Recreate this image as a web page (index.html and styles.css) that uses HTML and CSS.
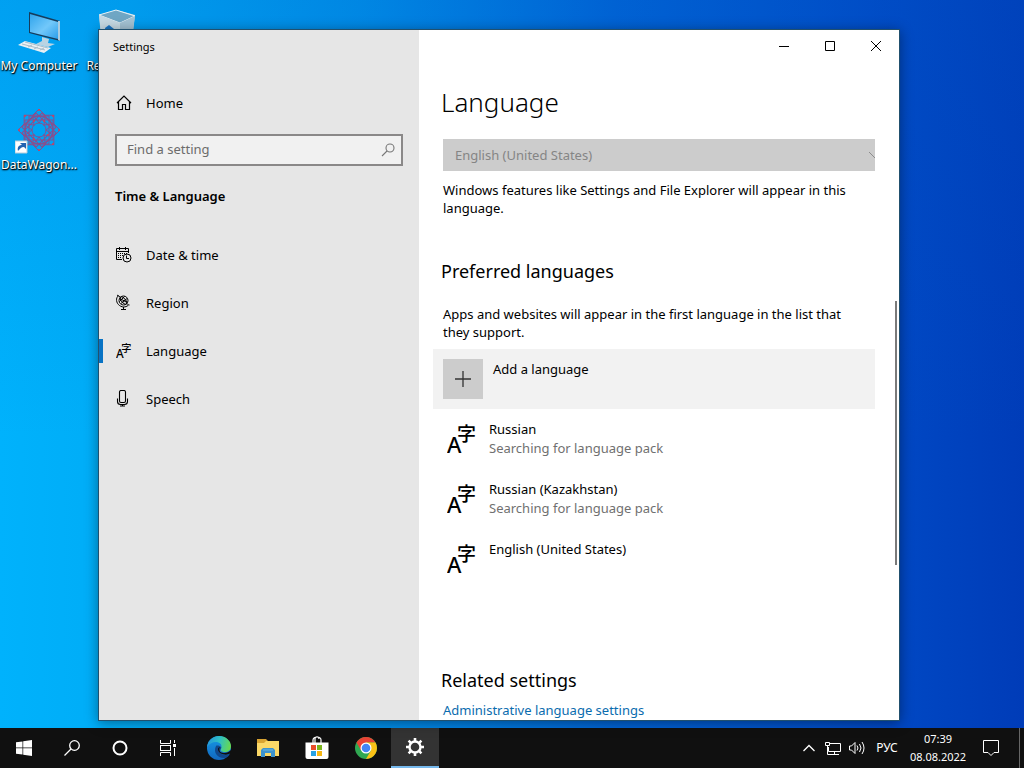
FILE: index.html
```html
<!DOCTYPE html>
<html lang="en">
<head>
    <meta charset="UTF-8">
    <meta name="viewport" content="width=device-width, initial-scale=1.0">
    <title>Settings</title>
    <link rel="stylesheet" href="styles.css">
</head>
<body>
    <!-- Shared icon -->
    <svg class="sprite" aria-hidden="true">
        <symbol id="icon-language" viewBox="0 0 30 30">
            <text x="0" y="29" class="glyph-latin">A</text>
            <text x="10" y="17" class="glyph-kanji">字</text>
        </symbol>
    </svg>

    <main class="desktop">
        <!-- Desktop shortcuts -->
        <a href="#" class="shortcut shortcut-computer">
            <svg width="48" height="48" viewBox="0 0 48 48" aria-hidden="true">
                <defs>
                    <linearGradient id="screen" x1="0" y1="0" x2="1" y2="1">
                        <stop offset="0" stop-color="#2fa4ec"/>
                        <stop offset=".55" stop-color="#72c8fa"/>
                        <stop offset="1" stop-color="#2b9eea"/>
                    </linearGradient>
                </defs>
                <path d="M27 28l7 2-1 4 7 1-7 3-12-3 6-3z" fill="#b9d4e3"/>
                <path d="M14 3l31 9v20L14 24z" fill="#163c5c"/>
                <path d="M15 5l28 8v17l-28-7z" fill="url(#screen)"/>
                <path d="M43 12l2 0v20l-2-1z" fill="#a8cbe0"/>
                <path d="M3 36l7-4 26 7-7 5z" fill="#e9f0f4"/>
                <path d="M7 35l23 6M10 33l23 6M13 38l4-2M19 40l4-2M25 41l4-2" stroke="#a9bdc9" fill="none"/>
            </svg>
            <span>My Computer</span>
        </a>
        <a href="#" class="shortcut shortcut-bin">
            <svg width="48" height="48" viewBox="0 0 48 48" aria-hidden="true">
                <path d="M5 6l18-5 18 5-4 35-22 3-7-4z" fill="#b4d0df"/>
                <path d="M5 6l17-5 19 6-15 7z" fill="#6fa6c4" stroke="#e6f1f6"/>
                <path d="M5 6l21 8v30l-17-3z" fill="#c6d9e3"/>
                <path d="M26 14l15-7-5 34-10 3z" fill="#a3c2d3"/>
                <path d="M11 19l4-3 5 4-2 6h-6z" fill="#1975c5"/>
            </svg>
            <span>Recycle Bin</span>
        </a>
        <a href="#" class="shortcut shortcut-datawagon">
            <svg width="48" height="48" viewBox="0 0 48 48" aria-hidden="true">
                <g fill="none" stroke="#87508f" stroke-width="1">
                    <g id="petals">
                        <path d="M24 15l-6-8 6-6 6 6zM24 43l-6-6 6-8 6 8z"/>
                        <path d="M17 22l-8-6-6 6 6 6zM31 22l8-6 6 6-6 6z"/>
                        <path d="M14 8h20v28H14zM10 12h28v20H10z"/>
                        <circle cx="24" cy="22" r="14"/>
                    </g>
                    <use href="#petals" transform="rotate(45 24 22)"/>
                    <circle cx="24" cy="22" r="7"/>
                </g>
                <g fill="#d0405a">
                    <circle cx="24" cy="2" r="1"/><circle cx="38" cy="8" r="1"/><circle cx="44" cy="22" r="1"/><circle cx="38" cy="36" r="1"/>
                    <circle cx="24" cy="42" r="1"/><circle cx="10" cy="8" r="1"/><circle cx="4" cy="22" r="1"/>
                    <circle cx="19" cy="13" r="1"/><circle cx="29" cy="13" r="1"/><circle cx="33" cy="27" r="1"/><circle cx="19" cy="31" r="1"/>
                </g>
                <path d="M0 33h12v12H0z" fill="#fff" stroke="#b8cbd8"/>
                <path d="M3 43c-1-4 1-6 4-6l-2-2h6v6l-2-2c-3 0-4 2-6 4z" fill="#2263b1"/>
            </svg>
            <span>DataWagon...</span>
        </a>

        <!-- Settings window -->
        <section class="window" aria-label="Settings">
            <aside class="sidebar">
                <div class="window-title">Settings</div>
                <a href="#" class="nav-link home-link">
                    <svg width="16" height="16" viewBox="0 0 16 16" aria-hidden="true">
                        <path d="M1 8l7-7 7 7M2.500 7v7.500h4v-5h3v5h4V7" fill="none" stroke="#000" stroke-width="1.200"/>
                    </svg>
                    Home
                </a>
                <form class="search">
                    <input type="text" id="search" aria-label="Find a setting" placeholder="Find a setting">
                    <button type="button" aria-label="Search">
                        <svg width="14" height="14" viewBox="0 0 14 14" aria-hidden="true">
                            <g fill="none" stroke="#777" stroke-width="1.100"><circle cx="9" cy="5" r="4"/><path d="M6 8l-5 5"/></g>
                        </svg>
                    </button>
                </form>
                <h2 class="category">Time &amp; Language</h2>
                <nav>
                    <a href="#" class="nav-link">
                        <svg width="16" height="18" viewBox="0 0 16 18" aria-hidden="true">
                            <g fill="none" stroke="#000">
                                <path d="M6 13.500H.5v-11h12V7M.5 5.500h12M3.500 1v3M9.500 1v3"/>
                                <path d="M2 7.500h9M2 9.500h5M2 11.500h4" stroke-dasharray="1 1"/>
                                <circle cx="11" cy="12" r="4"/><path d="M10.500 9.500v3H13"/>
                            </g>
                        </svg>
                        Date &amp; time
                    </a>
                    <a href="#" class="nav-link">
                        <svg width="16" height="18" viewBox="0 0 16 18" aria-hidden="true">
                            <g fill="none" stroke="#000">
                                <circle cx="7.500" cy="6.500" r="4.500"/>
                                <ellipse cx="7.500" cy="6.500" rx="2" ry="4.500" transform="rotate(-40 7.500 6.500)"/>
                                <path d="M4 4.500l7 4M5 9.500l6-5M3.500 7.500l5-5"/>
                                <path d="M2.500 1.500C-.5 4 0 9 3.500 11.500s7.500 1.500 9.500-1M1 1l3 2M11 9.500l2 2M7.500 13v2.500M5 15.500h5"/>
                            </g>
                        </svg>
                        Region
                    </a>
                    <a href="#" class="nav-link active" aria-current="page">
                        <svg width="16" height="16" aria-hidden="true"><use href="#icon-language"/></svg>
                        Language
                    </a>
                    <a href="#" class="nav-link">
                        <svg width="16" height="18" viewBox="0 0 16 18" aria-hidden="true">
                            <g fill="none" stroke="#000" stroke-width="1.100">
                                <rect x="3.500" y=".5" width="6" height="12" rx="1.500"/>
                                <path d="M1.500 8.500v3c0 2 1 3 3 3h4c2 0 3-1 3-3v-3M6.500 14.500v2M4 16h5"/>
                            </g>
                        </svg>
                        Speech
                    </a>
                </nav>
            </aside>

            <div class="pane">
                <div class="window-controls">
                    <button type="button" aria-label="Minimize"><svg width="12" height="12" viewBox="0 0 12 12"><path d="M1 6.500h10" stroke="#000"/></svg></button>
                    <button type="button" aria-label="Maximize"><svg width="12" height="12" viewBox="0 0 12 12"><path d="M1.500 1.500h9v9h-9z" fill="none" stroke="#000"/></svg></button>
                    <button type="button" aria-label="Close"><svg width="12" height="12" viewBox="0 0 12 12"><path d="M1 1l10 10M11 1L1 11" stroke="#000"/></svg></button>
                </div>

                <div class="content">
                    <h1>Language</h1>
                    <div class="select-wrap">
                        <select id="display-language" aria-label="Display language" disabled>
                            <option>English (United States)</option>
                        </select>
                        <svg width="6" height="8" viewBox="0 0 6 8" aria-hidden="true"><path d="M0 1l6 6" stroke="#8c8c8c"/></svg>
                    </div>
                    <p>Windows features like Settings and File Explorer will appear in this language.</p>

                    <h2>Preferred languages</h2>
                    <p>Apps and websites will appear in the first language in the list that they support.</p>
                    <button type="button" class="add-language">
                        <span class="add-icon">
                            <svg width="16" height="16" viewBox="0 0 16 16" aria-hidden="true"><path d="M8 0v16M0 8h16" stroke="#333" stroke-width="1.300"/></svg>
                        </span>
                        Add a language
                    </button>
                    <ul class="languages">
                        <li>
                            <svg width="30" height="30" aria-hidden="true"><use href="#icon-language"/></svg>
                            <div>Russian<small>Searching for language pack</small></div>
                        </li>
                        <li>
                            <svg width="30" height="30" aria-hidden="true"><use href="#icon-language"/></svg>
                            <div>Russian (Kazakhstan)<small>Searching for language pack</small></div>
                        </li>
                        <li>
                            <svg width="30" height="30" aria-hidden="true"><use href="#icon-language"/></svg>
                            <div>English (United States)</div>
                        </li>
                    </ul>

                    <h2 class="related">Related settings</h2>
                    <a href="#" class="related-link">Administrative language settings</a>
                </div>
                <div class="scroll-thumb"></div>
            </div>
        </section>
    </main>

    <!-- Taskbar -->
    <footer class="taskbar">
        <div class="system-buttons">
            <button type="button" aria-label="Start">
                <svg width="16" height="16" viewBox="0 0 16 16"><path d="M0 2.300l6.500-.9v6.200H0zM7.200 1.300L16 0v7.600H7.200zM0 8.300h6.500v6.300L0 13.700zM7.200 8.300H16V16l-8.800-1.300z" fill="#fff"/></svg>
            </button>
            <button type="button" aria-label="Search">
                <svg width="16" height="16" viewBox="0 0 16 16"><g fill="none" stroke="#fff" stroke-width="1.300"><circle cx="10.500" cy="5.500" r="4.800"/><path d="M7 9l-6.500 6.500"/></g></svg>
            </button>
            <button type="button" aria-label="Cortana">
                <svg width="16" height="16" viewBox="0 0 16 16"><circle cx="8" cy="8" r="6.500" fill="none" stroke="#fff" stroke-width="2"/></svg>
            </button>
            <button type="button" aria-label="Task view">
                <svg width="18" height="16" viewBox="0 0 18 16"><path d="M1.500 0v3.500h10V0M1.500 16v-3.500h10V16M1.500 5v6M11.500 5v6M1 5.500h11M1 10.500h11M15.500 0v3M15.500 8v8" fill="none" stroke="#fff"/><path d="M14 4h3v3h-3z" fill="#fff"/></svg>
            </button>
        </div>
        <div class="apps">
            <button type="button" aria-label="Edge">
                <svg width="26" height="26" viewBox="0 0 26 26">
                    <defs>
                        <linearGradient id="edge-top" x1="0" y1=".3" x2="1" y2=".5">
                            <stop offset="0" stop-color="#2494dc"/>
                            <stop offset=".5" stop-color="#2fc1c4"/>
                            <stop offset="1" stop-color="#67d94f"/>
                        </linearGradient>
                        <linearGradient id="edge-left" x1="0" y1="0" x2="0" y2="1">
                            <stop offset="0" stop-color="#159ae6"/>
                            <stop offset="1" stop-color="#1267bf"/>
                        </linearGradient>
                    </defs>
                    <circle cx="13" cy="13" r="12" fill="url(#edge-left)"/>
                    <path d="M1 12C2 5 7 1 13 1c7 0 12 5 12 10 0 4-3 6-6 6-3 0-5-1-4-3 2-5-2-7-5-7-4 0-7 2-9 5z" fill="url(#edge-top)"/>
                    <path d="M10 11c-3 6 1 12 8 12 2 0 4-1 6-4-4 2-10 1-10-3 0-2 2-3 1-4s-4-2-5-1z" fill="#11488c"/>
                    <path d="M14 12c-2 3 0 6 4 6 3 0 5-1 7-3v3l-2 1c-5 2-11-1-11-5 0-1 1-2 2-2z" fill="#101010"/>
                </svg>
            </button>
            <button type="button" aria-label="File Explorer">
                <svg width="22" height="20" viewBox="0 0 22 20"><path d="M0 1h9l2 2h11v15H0z" fill="#d9a432"/><path d="M0 5h7l2-2h13v15H0z" fill="#fbd867"/><path d="M4 19v-7l2-2h10l2 2v7h-4v-4H8v4z" fill="#3d93cd"/><path d="M6 12h10" stroke="#6bb6e2"/></svg>
            </button>
            <button type="button" aria-label="Microsoft Store">
                <svg width="24" height="24" viewBox="0 0 24 24"><path d="M8 7V4c0-4 8-4 8 0v3M10 7V3c0-3 4-3 4 0" fill="none" stroke="#fff" stroke-width="1.200"/><path d="M.5 6.500h23V21q0 2-2 2h-19q-2 0-2-2z" fill="#fff"/><path d="M6 9h5v5H6z" fill="#e94e2b"/><path d="M12 9h5v5h-5z" fill="#7bb51d"/><path d="M6 15h5v5H6z" fill="#28a2e4"/><path d="M12 15h5v5h-5z" fill="#f7b713"/></svg>
            </button>
            <button type="button" aria-label="Chrome">
                <svg width="22" height="22" viewBox="0 0 22 22"><circle cx="11" cy="11" r="11" fill="#30a852"/><path d="M1.500 5.500a11 11 0 0 1 19 0H11l-4.800 8.200z" fill="#e84335"/><path d="M20.500 5.500A11 11 0 0 1 11 22l4.800-8.200L11 5.500z" fill="#fbc116"/><circle cx="11" cy="11" r="5.500" fill="#fff"/><circle cx="11" cy="11" r="4.300" fill="#4285f4"/></svg>
            </button>
            <button type="button" class="running" aria-label="Settings">
                <svg width="20" height="20" viewBox="0 0 20 20">
                    <g stroke="#fff" fill="none">
                        <circle cx="10" cy="10" r="5.500" stroke-width="2.400"/>
                        <path d="M10 1v3M10 16v3M1 10h3M16 10h3M3.600 3.600l2.200 2.200M14.200 14.200l2.200 2.200M3.600 16.400l2.200-2.200M14.200 5.800l2.200-2.200" stroke-width="2.600"/>
                    </g>
                </svg>
            </button>
        </div>
        <div class="tray">
            <button type="button" aria-label="Show hidden icons"><svg width="14" height="8" viewBox="0 0 14 8"><path d="M1.500 7L7 1.500 12.500 7" fill="none" stroke="#fff" stroke-width="1.300"/></svg></button>
            <button type="button" aria-label="Network"><svg width="18" height="14" viewBox="0 0 18 14"><path d="M6 2.500h10.500v8H4.500V6M10.500 10.500v3M6 13.500h9M1.500 1.500h4v3h-4zM3.500 4.500v9H6" fill="none" stroke="#fff"/></svg></button>
            <button type="button" aria-label="Volume"><svg width="18" height="14" viewBox="0 0 18 14"><path d="M1.500 5h2L7 1.500v11L3.500 9h-2zM9 4.500q2 2.500 0 5M11.500 3q3 4 0 8M14 1q4 6 0 12" fill="none" stroke="#fff"/></svg></button>
            <button type="button" class="keyboard" lang="ru">РУС</button>
            <button type="button" class="clock"><span>07:39</span><span>08.08.2022</span></button>
            <button type="button" class="notifications" aria-label="Notifications"><svg width="18" height="18" viewBox="0 0 18 18"><path d="M1.500 1.500h15v12H12l-3 3-3-3H1.500z" fill="none" stroke="#fff"/></svg></button>
            <button type="button" class="show-desktop" aria-label="Show desktop"></button>
        </div>
    </footer>
</body>
</html>
```
FILE: styles.css
```css
* {
    box-sizing: border-box;
}

body {
    font-family: "Noto Sans", "Noto Sans CJK JP", sans-serif;
    font-size: 13px;
    line-height: 18px;
    color: #000;
    margin: 0;
    height: 100vh;
    display: flex;
    flex-direction: column;
    overflow: hidden;
}

h1, h2, p, ul {
    margin: 0;
    padding: 0;
    font-weight: normal;
}

a {
    color: inherit;
    text-decoration: none;
}

button {
    font: inherit;
    color: inherit;
    background: none;
    border: none;
    padding: 0;
    display: flex;
    align-items: center;
    justify-content: center;
}

svg {
    flex-shrink: 0;
}

.sprite {
    display: none;
}

.glyph-latin {
    font-size: 22px;
    font-weight: 500;
}

.glyph-kanji {
    font-family: "Noto Sans CJK JP", sans-serif;
    font-size: 19px;
    font-weight: 500;
}

/* Desktop */
.desktop {
    position: relative;
    flex: 1;
    min-height: 0;
    background: linear-gradient(to bottom, rgba(0, 90, 200, 0.2), rgba(0, 90, 200, 0) 60%),
        linear-gradient(to right, #00b2fc 0%, #00acf6 12%, #0092ea 35%, #0064d6 60%, #004ac6 85%, #003cb8 100%);
}

.shortcut {
    position: absolute;
    width: 78px;
    display: flex;
    flex-direction: column;
    align-items: center;
    font-size: 12px;
    color: #fff;
    text-shadow: 0 1px 2px #000, 1px 1px 1px #000;
    white-space: nowrap;
}

.shortcut-computer {
    left: 0;
    top: 9px;
}

.shortcut-bin {
    left: 79px;
    top: 9px;
}

.shortcut-datawagon {
    left: 0;
    top: 108px;
}

/* Window */
.window {
    position: absolute;
    top: 29px;
    right: 124px;
    bottom: 7px;
    left: 98px;
    display: flex;
    background-color: #fff;
    border: 1px solid #21506e;
    box-shadow: 0 2px 12px rgba(0, 0, 0, 0.4);
}

.sidebar {
    flex: 0 0 320px;
    background-color: #e6e6e6;
}

.window-title {
    height: 32px;
    padding: 0 14px;
    font-size: 11px;
    line-height: 34px;
}

.nav-link {
    display: flex;
    align-items: center;
    gap: 14px;
    height: 48px;
    padding-left: 17px;
}

.home-link {
    margin-top: 17px;
}

.search {
    display: flex;
    height: 32px;
    margin: 7px 16px 18px;
    border: 2px solid #8a8888;
    background-color: #f1f1f1;
}

.search input {
    flex: 1;
    min-width: 0;
    padding: 0 10px 2px;
    border: none;
    background: none;
    font: inherit;
}

.search input::placeholder {
    color: #6c6c6c;
}

.search button {
    width: 26px;
}

.category {
    margin: 0 16px 23px;
    font-size: 13px;
    font-weight: 600;
    line-height: 24px;
}

.active {
    background: linear-gradient(#0873c4, #0873c4) left center / 4px 24px no-repeat;
}

.pane {
    position: relative;
    flex: 1;
    min-width: 0;
    overflow: hidden;
}

.window-controls {
    display: flex;
    justify-content: flex-end;
}

.window-controls button {
    width: 46px;
    height: 32px;
}

.content {
    padding: 24px 24px 0;
}

h1, .content h2 {
    margin-left: -2px;
}

h1 {
    font-size: 26px;
    font-weight: 300;
    line-height: 32px;
}

.content h2 {
    margin-top: 42px;
    font-size: 18px;
    line-height: 24px;
}

.content p {
    padding-right: 20px;
}

.select-wrap {
    display: flex;
    align-items: center;
    height: 32px;
    margin: 21px 0 10px;
    background-color: #ccc;
}

.select-wrap select {
    flex: 1;
    height: 32px;
    padding: 0 12px;
    border: none;
    background: none;
    appearance: none;
    font: inherit;
    color: #858585;
    opacity: 1;
}

.content h2 + p {
    margin-top: 22px;
}

.add-language {
    align-items: flex-start;
    justify-content: flex-start;
    gap: 10px;
    width: calc(100% + 10px);
    height: 60px;
    margin: 8px 0 0 -10px;
    padding: 10px;
    background-color: #f2f2f2;
    line-height: 20px;
}

.add-icon {
    display: flex;
    align-items: center;
    justify-content: center;
    width: 40px;
    height: 40px;
    background-color: #ccc;
}

.languages {
    list-style: none;
}

.languages li {
    display: flex;
    gap: 12px;
    height: 60px;
    padding: 10px 4px;
    line-height: 20px;
}

.languages svg {
    margin-top: 5px;
}

.languages small {
    display: block;
    font-size: 13px;
    line-height: 18px;
    color: #707070;
}

.content .related {
    margin-top: 79px;
    margin-bottom: 9px;
}

.related-link {
    display: block;
    color: #0a6cae;
}

.scroll-thumb {
    position: absolute;
    top: 271px;
    right: 2px;
    width: 2px;
    height: 264px;
    background-color: #7a7a7a;
}

/* Taskbar */
.taskbar {
    display: flex;
    height: 40px;
    background-color: #101010;
    color: #fff;
    font-size: 12px;
}

.system-buttons, .apps, .tray {
    display: flex;
}

.system-buttons button, .apps button {
    width: 48px;
}

.apps {
    gap: 1px;
    margin-left: 3px;
}

.apps .running {
    background-color: #333;
    border-bottom: 2px solid #76b9ed;
}

.tray {
    margin-left: auto;
}

.tray button {
    width: 24px;
}

.tray .keyboard {
    width: 36px;
}

.tray .clock {
    flex-direction: column;
    width: 66px;
    font-size: 11px;
}

.tray .notifications {
    width: 40px;
}

.tray .show-desktop {
    width: 5px;
    margin-left: 8px;
    border-left: 1px solid #666;
}
```
